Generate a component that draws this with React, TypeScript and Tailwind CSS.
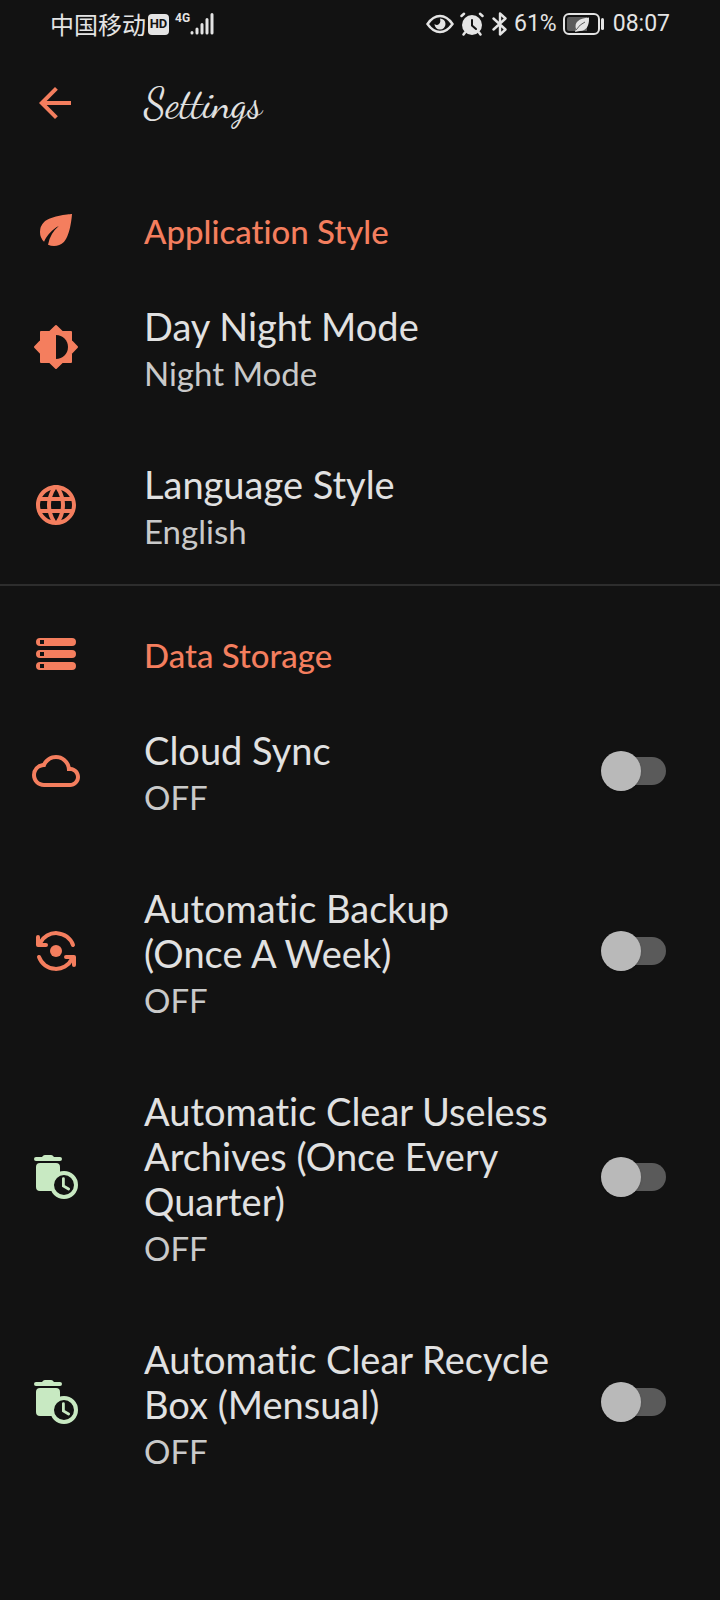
import type { ReactNode } from "react";
import { MdLanguage } from "react-icons/md";

const svg = "block size-12 shrink-0";

function Leaf({ className }: { className: string }) {
  return (
    <svg viewBox="0 0 24 24" className={className} fill="currentColor" aria-hidden="true">
      <path d="M6.05 8.05a7 7 0 0 0-.02 9.88c1.47-3.4 4.09-6.24 7.36-7.93A15.95 15.95 0 0 0 8 19.32c2.6 1.23 5.8.78 7.95-1.37C19.43 14.47 20 4 20 4S9.53 4.57 6.05 8.05z" />
    </svg>
  );
}

function Brightness() {
  return (
    <svg viewBox="0 0 24 24" className={svg} fill="currentColor" aria-hidden="true">
      <path stroke="currentColor" strokeWidth="1" strokeLinejoin="round" d="M19.5 15.1 22.5 12l-3-3.1V4.5h-4.4L12 1.5l-3.1 3H4.5v4.4L1.5 12l3 3.1v4.4h4.4l3.1 3 3.1-3h4.4z" />
      <path className="fill-[#121212]" d="M12 18V6c3.31 0 6 2.69 6 6s-2.69 6-6 6z" />
    </svg>
  );
}

function Storage() {
  return (
    <svg viewBox="0 0 24 24" className={svg} fill="currentColor" aria-hidden="true">
      <path fillRule="evenodd" d="M4 20h16a2 2 0 0 0 0-4H4a2 2 0 0 0 0 4zm0-3h2v2H4zM2 6a2 2 0 0 0 2 2h16a2 2 0 0 0 0-4H4a2 2 0 0 0-2 2zm4 1H4V5h2zM4 14h16a2 2 0 0 0 0-4H4a2 2 0 0 0 0 4zm0-3h2v2H4z" />
    </svg>
  );
}

function Cloud() {
  return (
    <svg viewBox="0 0 24 24" className={svg} fill="currentColor" aria-hidden="true">
      <path d="M19.35 10.04A7.49 7.49 0 0 0 12 4C9.11 4 6.6 5.64 5.35 8.04A5.994 5.994 0 0 0 0 14c0 3.31 2.69 6 6 6h13c2.76 0 5-2.24 5-5 0-2.64-2.05-4.78-4.65-4.96zM19 18H6c-2.21 0-4-1.79-4-4s1.79-4 4-4h.71C7.37 7.69 9.48 6 12 6c3.04 0 5.5 2.46 5.5 5.5v.5H19c1.66 0 3 1.34 3 3s-1.34 3-3 3z" />
    </svg>
  );
}

function Sync() {
  return (
    <svg viewBox="0 0 24 24" className={svg} fill="none" stroke="currentColor" strokeWidth="2" strokeLinecap="round" strokeLinejoin="round" aria-hidden="true">
      <circle cx="12" cy="12" r="3" fill="currentColor" stroke="none" />
      <path d="M20.5 9A9 9 0 0 0 4 8M3.5 15A9 9 0 0 0 20 16" />
      <path d="M3 5v4h4M21 19v-4h-4" />
    </svg>
  );
}

function AutoDelete() {
  return (
    <svg viewBox="0 1 24 24" className="block size-12 shrink-0 text-[#c8e9c2]" fill="currentColor" aria-hidden="true">
      <path d="M2 3h3l.7-.7q.3-.3.7-.3h3.2q.4 0 .7.3l.7.7h3a1 1 0 0 1 0 2H2a1 1 0 0 1 0-2zM4 6h8a2 2 0 0 1 2 2v10a2 2 0 0 1-2 2H4a2 2 0 0 1-2-2V8a2 2 0 0 1 2-2z" />
      <circle cx="16" cy="17" r="6" className="fill-[#121212]" stroke="currentColor" strokeWidth="2" />
      <path d="M15.7 13.8v3.7l2.6 1.5" fill="none" stroke="currentColor" strokeWidth="1.4" strokeLinecap="round" />
    </svg>
  );
}

function StatusBar() {
  return (
    <div className="flex h-12 items-center justify-between px-[50px] text-[#e4e4e4]">
      <div className="flex items-center">
        <span className="font-['Noto_Sans_CJK_SC',sans-serif] text-[24px] leading-8">中国移动</span>
        <span className="ml-0.5 flex h-[21px] w-[21px] items-center justify-center rounded-[4px] bg-[#e4e4e4] font-['Roboto',sans-serif] text-[13px] font-bold text-[#121212]">HD</span>
        <span className="ml-1.5 self-start pt-0.5 font-['Roboto',sans-serif] text-[12px] leading-4 font-bold">4G</span>
        <svg viewBox="0 0 24 22" className="h-[22px] w-6" stroke="currentColor" strokeWidth="3" strokeLinecap="round" aria-hidden="true">
          <path d="M2 19.5v.5M7 16v4M12 11.5v8.5M17 6.5v13.5M22 1.5v18.5" />
        </svg>
      </div>
      <div className="flex items-center">
        <svg viewBox="0 0 28 20" className="h-5 w-7" fill="none" stroke="currentColor" strokeWidth="2.4" aria-hidden="true">
          <path d="M1.5 10Q7 2 14 2t12.5 8Q21 18 14 18T1.5 10z" />
          <path d="M14 4.5a5.500 5.500 0 1 1-5.500 5.500q2.500 2 4.500 0t1-5.500z" fill="currentColor" stroke="none" />
        </svg>
        <svg viewBox="0 0 24 24" className="ml-1.5 size-6" fill="none" stroke="currentColor" strokeLinecap="round" aria-hidden="true">
          <circle cx="12" cy="13" r="10" fill="currentColor" stroke="none" />
          <path strokeWidth="2.5" d="M1.5 4 4 1.8M22.5 4 20 1.8M5 20.5l-1.5 2M19 20.5l1.5 2" />
          <path className="stroke-[#121212]" strokeWidth="2" d="M12 8v5.5l4 3.5" />
        </svg>
        <svg viewBox="0 0 16 24" className="ml-2 h-6 w-4" fill="none" stroke="currentColor" strokeWidth="2.4" strokeLinejoin="round" strokeLinecap="round" aria-hidden="true">
          <path d="m1.5 6.5 12 11L8 22.5v-21l5.5 5-12 11" />
        </svg>
        <span className="ml-1.5 font-['Roboto',sans-serif] text-[23px] leading-8">61%</span>
        <svg viewBox="0 0 42 22" className="ml-1.5 h-[22px] w-[42px]" fill="none" aria-hidden="true">
          <rect x="1" y="1" width="35" height="20" rx="5" stroke="currentColor" strokeWidth="2" />
          <path className="fill-[#5b5b5b]" d="M6 4h18v14H6q-2 0-2-2V6q0-2 2-2z" />
          <path fill="currentColor" d="M26 4.5q.5 13-9 13.5-2 0-3 .5l-2 .5 1-3Q10 6 26 4.5z" />
          <path className="stroke-[#5b5b5b]" d="M13 17q4-6 9-8" />
          <path d="M39.5 6.5v9" stroke="currentColor" strokeWidth="3" strokeLinecap="round" />
        </svg>
        <span className="ml-2 font-['Roboto',sans-serif] text-[23px] leading-8">08:07</span>
      </div>
    </div>
  );
}

function Category({ icon, title }: { icon: ReactNode; title: string }) {
  return (
    <div className="flex items-center px-8 pt-11 pb-3.5">
      {icon}
      <h2 className="ml-16 pt-0.5 text-[33px] leading-[44px] font-medium">{title}</h2>
    </div>
  );
}

function Texts({ title, summary }: { title: string; summary: string }) {
  return (
    <span className="ml-16 block min-w-0 flex-1 pt-1 text-left">
      <span className="block text-[38px] leading-[45px] text-[#e1e1e1]">{title}</span>
      <span className="block pt-1 text-[33px] leading-10 text-[#c9c9c9]">{summary}</span>
    </span>
  );
}

const row = "flex w-full items-center px-8 pt-8 pb-[33px]";

function Choice({ icon, title, summary }: { icon: ReactNode; title: string; summary: string }) {
  return (
    <button type="button" className={row}>
      {icon}
      <Texts title={title} summary={summary} />
    </button>
  );
}

function Toggle({ icon, title }: { icon: ReactNode; title: string }) {
  return (
    <label className={row}>
      {icon}
      <Texts title={title} summary="OFF" />
      <span className="ml-11 grid w-[87px] shrink-0 items-center pr-[22px]">
        <input type="checkbox" role="switch" className="peer col-start-1 row-start-1 h-7 w-[58px] appearance-none justify-self-end rounded-full bg-[#5a5a5a]" />
        <span className="col-start-1 row-start-1 size-10 rounded-full bg-[#b9b9b9] shadow-sm peer-checked:justify-self-end" />
      </span>
    </label>
  );
}

export default function App() {
  return (
    <div className="min-h-screen bg-[#121212] font-['Lato',sans-serif] text-[#f47e5e] [font-variant-ligatures:none]">
      <StatusBar />
      <header className="flex h-28 items-center px-8">
        <button type="button" aria-label="Back">
          <svg viewBox="0.5 0.5 24 24" className={svg} fill="currentColor" aria-hidden="true">
            <path d="M20 11H7.83l5.59-5.59L12 4l-8 8 8 8 1.41-1.41L7.83 13H20v-2z" />
          </svg>
        </button>
        <h1 className="ml-16 font-['Dancing_Script','Liberation_Serif',cursive] text-[41px] leading-[48px] text-[#e1e1e1]">Settings</h1>
      </header>
      <main className="pt-0.5">
        <section className="border-b-2 border-[#2d2d2d]">
          <Category icon={<Leaf className={svg} />} title="Application Style" />
          <Choice icon={<Brightness />} title="Day Night Mode" summary="Night Mode" />
          <Choice icon={<MdLanguage className={svg} />} title="Language Style" summary="English" />
        </section>
        <section>
          <Category icon={<Storage />} title="Data Storage" />
          <Toggle icon={<Cloud />} title="Cloud Sync" />
          <Toggle icon={<Sync />} title="Automatic Backup (Once A Week)" />
          <Toggle icon={<AutoDelete />} title="Automatic Clear Useless Archives (Once Every Quarter)" />
          <Toggle icon={<AutoDelete />} title="Automatic Clear Recycle Box (Mensual)" />
        </section>
      </main>
    </div>
  );
}
